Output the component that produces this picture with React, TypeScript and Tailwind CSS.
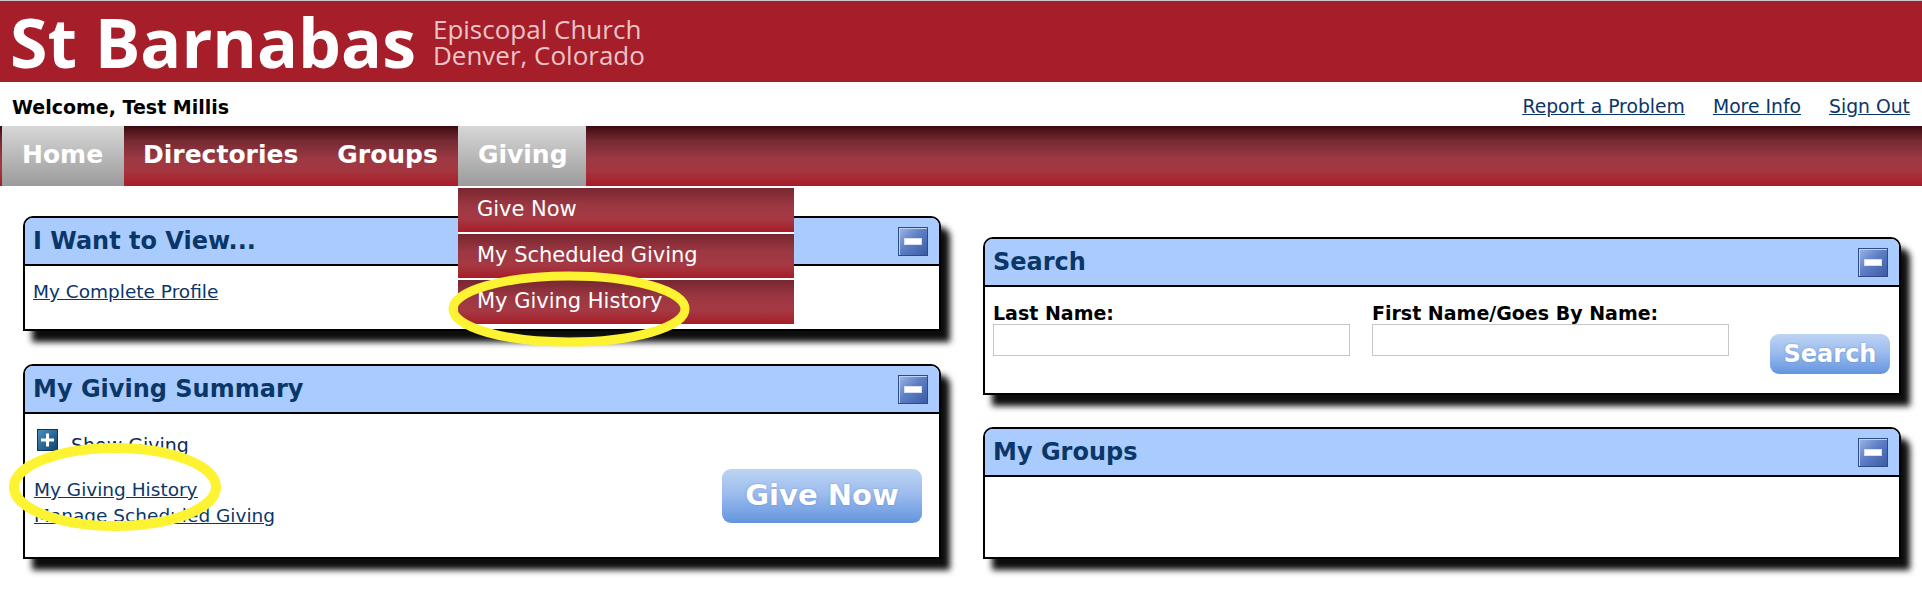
import React from "react";

const navy = "text-[#0b3668]";

function MinusIcon() {
  return (
    <div className="w-[30px] h-[29px] flex items-center justify-center border border-[#2d4a8a] bg-[linear-gradient(135deg,#9fb6e6_0%,#5f80c6_45%,#3b5ba3_100%)] shadow-[inset_1px_1px_0_#c3d2f1]">
      <div className="w-[18px] h-[7px] bg-white border border-[#d6deef]" />
    </div>
  );
}

function PlusIcon() {
  return (
    <svg width="21" height="22" viewBox="0 0 21 22">
      <defs>
        <linearGradient id="pl" x1="0" y1="0" x2="1" y2="1">
          <stop offset="0" stopColor="#4b90c0" />
          <stop offset="1" stopColor="#0f426e" />
        </linearGradient>
      </defs>
      <rect x="0.5" y="0.5" width="20" height="21" fill="url(#pl)" stroke="#0c3558" />
      <rect x="9" y="4.5" width="3" height="13" fill="#fff" />
      <rect x="4" y="9.5" width="13" height="3" fill="#fff" />
    </svg>
  );
}

function Panel({
  title,
  bodyH,
  children,
}: {
  title: string;
  bodyH: string;
  children?: React.ReactNode;
}) {
  return (
    <div className="bg-white border-2 border-black rounded-t-[10px] shadow-[9px_11px_6px_rgba(0,0,0,0.95)]">
      <div className="h-[48px] bg-[#a9cbfd] rounded-t-[8px] border-b-2 border-black flex items-center justify-between pl-[8px] pr-[11px]">
        <span className={`text-[24px] font-bold ${navy} leading-none`}>{title}</span>
        <MinusIcon />
      </div>
      <div className={bodyH}>{children}</div>
    </div>
  );
}

function BlueButton({ label, cls }: { label: string; cls: string }) {
  return (
    <button
      className={`rounded-[9px] bg-[linear-gradient(to_bottom,#bdd4f4_0%,#9dbdee_45%,#6494df_100%)] text-white font-bold [text-shadow:0_0_2px_rgba(60,100,170,0.5)] flex items-center justify-center ${cls}`}
    >
      {label}
    </button>
  );
}

export default function App() {
  const tabText = "text-[25px] font-bold text-white leading-none pb-[4px]";
  const menuItem =
    "h-[44px] flex items-center pl-[19px] text-[21px] text-white bg-[linear-gradient(to_bottom,#772630_0%,#9c3842_40%,#a53943_70%,#a81c28_100%)]";

  return (
    <div className="relative w-[1922px] h-[614px] overflow-hidden bg-white font-['DejaVu_Sans',sans-serif]">
      {/* Header banner */}
      <div className="h-[82px] bg-[#a51e29] border-t border-[#c9c9c9] flex items-center pl-[10px] font-['Open_Sans',sans-serif]">
        <span className="text-[68px] font-bold text-white leading-[78px]">St Barnabas</span>
        <div className="ml-[17px] text-[26px] leading-[26px] text-[#ebc4c7]">
          <div>Episcopal Church</div>
          <div>Denver, Colorado</div>
        </div>
      </div>

      {/* Welcome row */}
      <div className="h-[44px] flex items-center justify-between pl-[12px] pr-[12px] pt-[7px]">
        <span className="text-[19px] font-bold text-black">Welcome, Test Millis</span>
        <div className="flex gap-[28px] text-[18.8px] text-[#0b3668] underline">
          <a>Report a Problem</a>
          <a>More Info</a>
          <a>Sign Out</a>
        </div>
      </div>

      {/* Nav bar */}
      <div className="h-[60px] flex bg-[linear-gradient(to_bottom,#3d0a0f_0%,#762a33_25%,#9c3943_55%,#a5363f_75%,#a81b27_100%)]">
        <div className="ml-[2px] w-[122px] flex items-center pl-[20px] bg-[linear-gradient(to_bottom,#d7d7d7,#9b9b9b)]">
          <span className={tabText}>Home</span>
        </div>
        <div className="px-[19px] flex items-center">
          <span className={tabText}>Directories</span>
        </div>
        <div className="px-[20px] flex items-center">
          <span className={tabText}>Groups</span>
        </div>
        <div className="relative w-[128px] flex items-center pl-[20px] bg-[linear-gradient(to_bottom,#d7d7d7,#9b9b9b)]">
          <span className={tabText}>Giving</span>
          {/* Giving dropdown */}
          <div className="absolute left-0 top-full mt-[2px] w-[336px] z-20 flex flex-col gap-[2px] bg-white">
            <div className={menuItem}>Give Now</div>
            <div className={menuItem}>My Scheduled Giving</div>
            <div className={menuItem}>My Giving History</div>
          </div>
        </div>
      </div>

      {/* Content */}
      <div className="flex items-start">
        <div className="ml-[23px] mt-[30px] w-[918px] flex flex-col gap-[33px]">
          <Panel title="I Want to View..." bodyH="h-[63px] pl-[8px] pt-[15px]">
            <a className="text-[18.5px] leading-[20px] text-[#0b3668] underline">My Complete Profile</a>
          </Panel>
          <Panel title="My Giving Summary" bodyH="h-[143px] flex justify-between">
            <div className="pl-[12px] pt-[15px]">
              <div className="flex items-end gap-[13px]">
                <PlusIcon />
                <span className="text-[19px] leading-[20px] text-[#0b2d55] relative top-[4px]">Show Giving</span>
              </div>
              <div className="-ml-[3px] mt-[26px] flex flex-col text-[18.5px] leading-[26px] text-[#0b3668] underline">
                <a>My Giving History</a>
                <a>Manage Scheduled Giving</a>
              </div>
            </div>
            <BlueButton label="Give Now" cls="mt-[55px] mr-[17px] w-[200px] h-[54px] text-[29px]" />
          </Panel>
        </div>

        <div className="ml-[42px] mt-[51px] w-[918px] flex flex-col gap-[32px]">
          <Panel title="Search" bodyH="h-[106px] flex items-start pl-[8px] pr-[9px] pt-[16px]">
            <div className="w-[379px]">
              <div className="text-[19px] font-bold text-black leading-[20px]">Last Name:</div>
              <input className="mt-[1px] w-[357px] h-[32px] border border-[#c6c6c6] outline-none" />
            </div>
            <div className="w-[357px]">
              <div className="text-[19px] font-bold text-black leading-[20px]">First Name/Goes By Name:</div>
              <input className="mt-[1px] w-[357px] h-[32px] border border-[#c6c6c6] outline-none" />
            </div>
            <BlueButton label="Search" cls="ml-auto mt-[31px] w-[120px] h-[40px] text-[24px]" />
          </Panel>
          <Panel title="My Groups" bodyH="h-[80px]" />
        </div>
      </div>

      {/* Yellow highlight annotations */}
      <svg className="absolute left-[443px] top-[265px] z-30 pointer-events-none" width="254" height="90">
        <ellipse cx="126" cy="44" rx="116" ry="33" fill="none" stroke="#fef332" strokeWidth="9" />
      </svg>
      <svg className="absolute left-[5px] top-[438px] z-30 pointer-events-none" width="220" height="100">
        <ellipse cx="110" cy="49" rx="101" ry="39" fill="none" stroke="#fef332" strokeWidth="10" />
      </svg>
    </div>
  );
}
